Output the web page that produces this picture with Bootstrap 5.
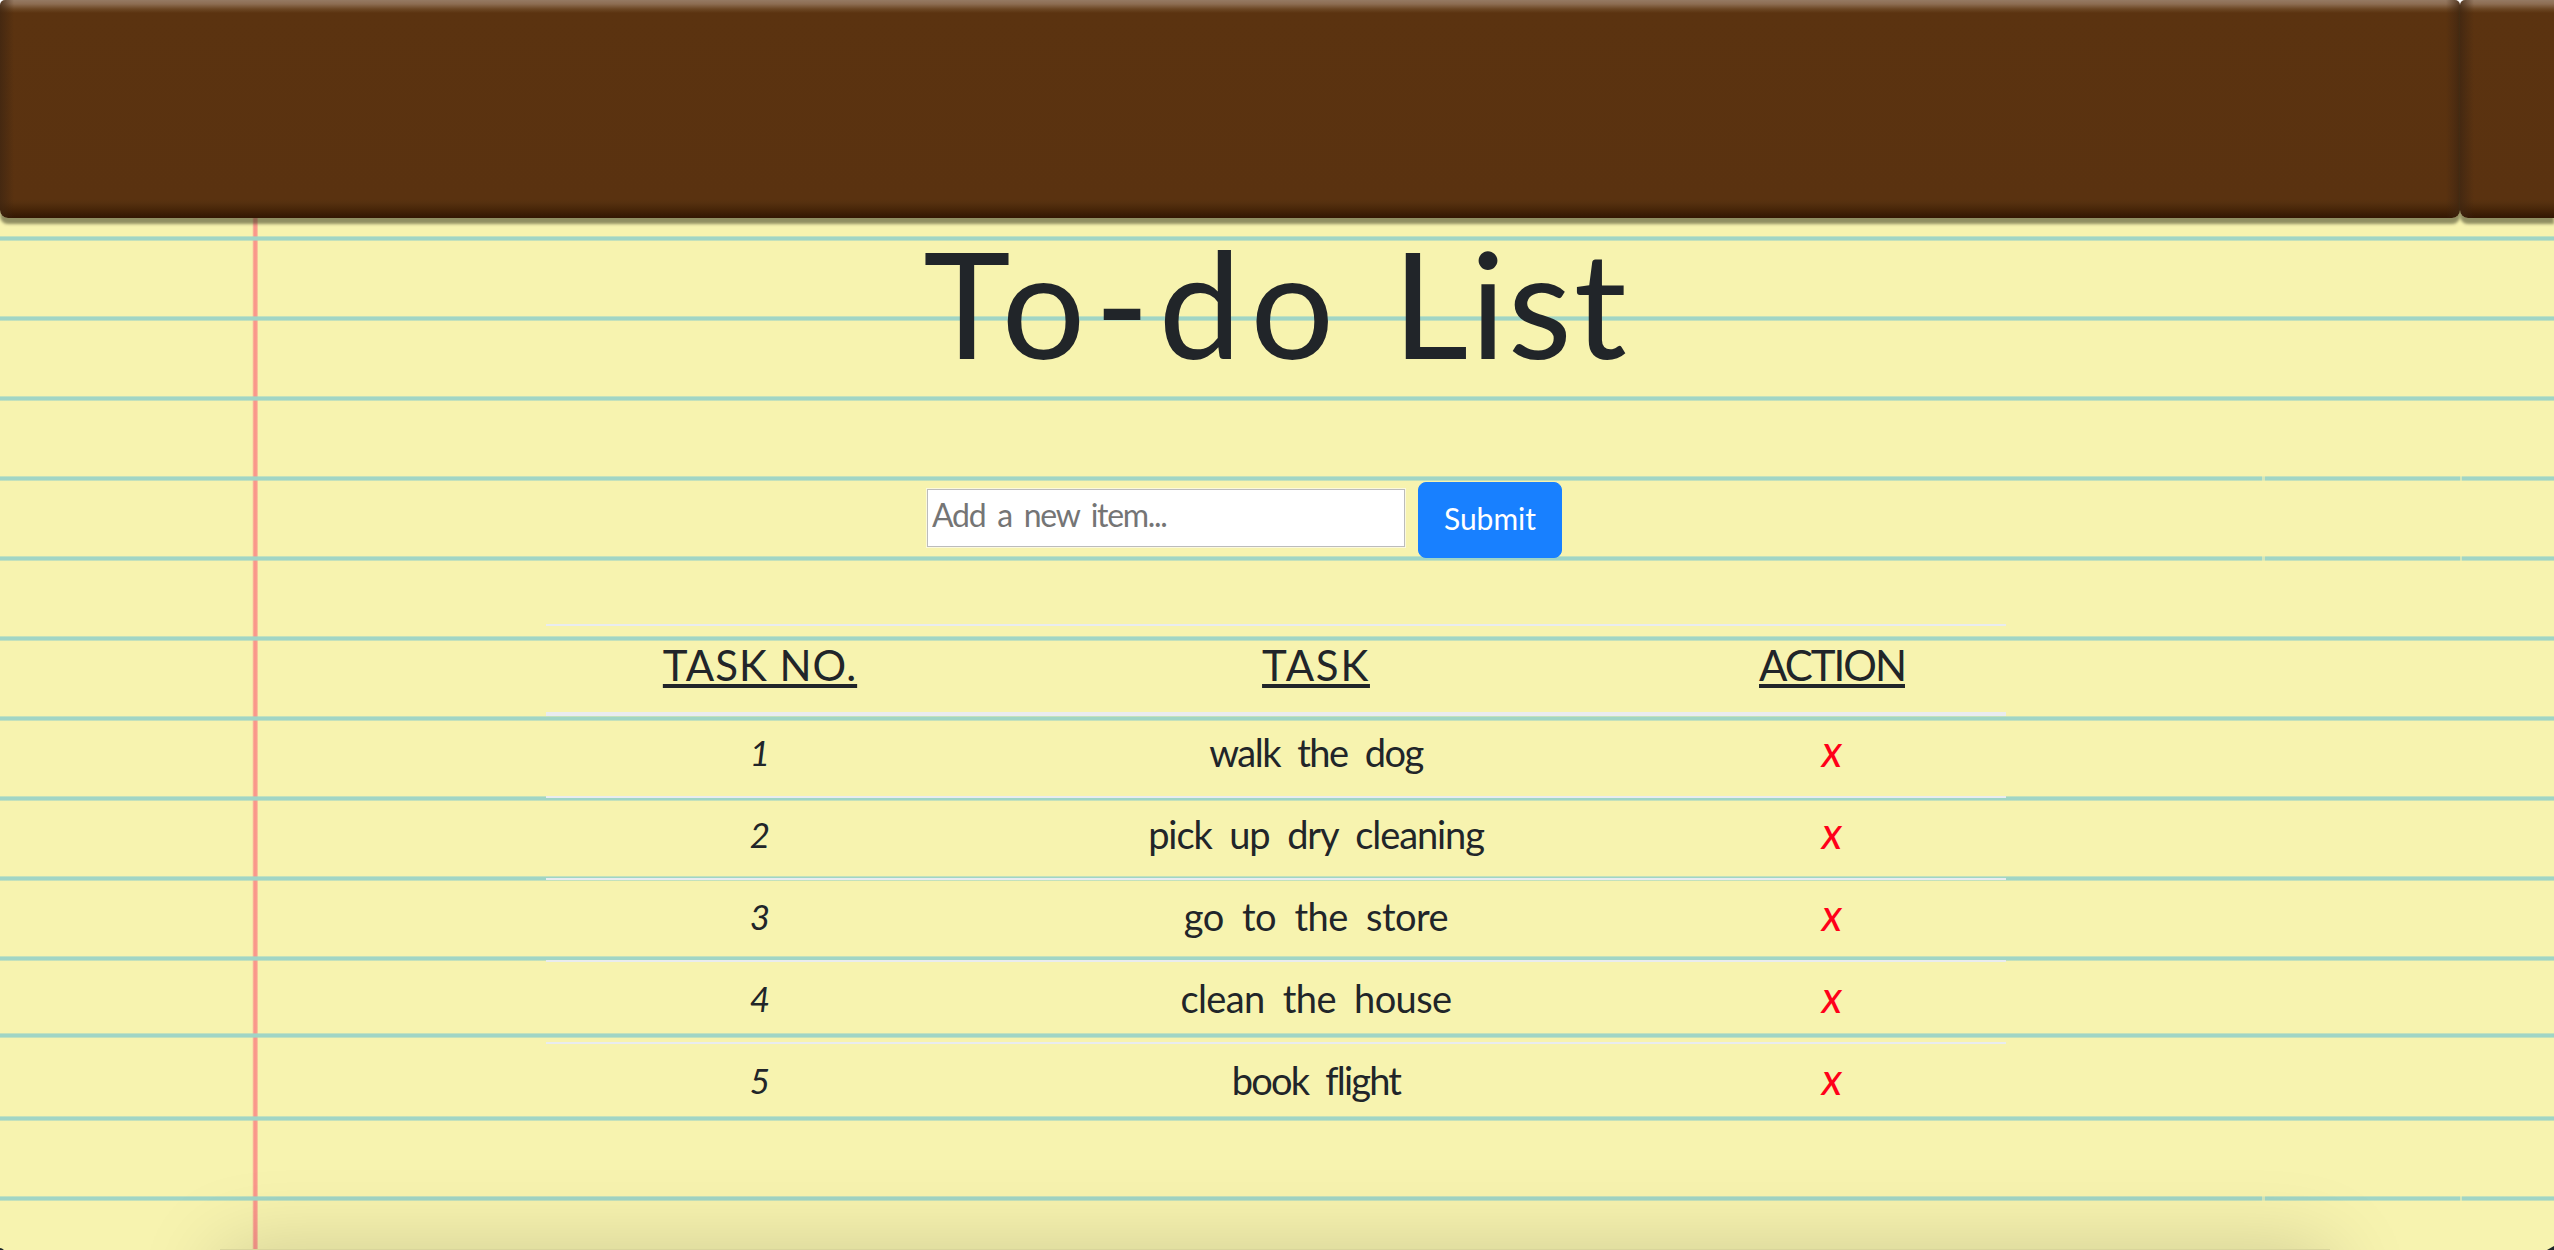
<!DOCTYPE html>
<html lang="en">
<head>
<meta charset="utf-8">
<title>To-do List</title>
<link href="https://cdn.jsdelivr.net/npm/bootstrap@5.3.0/dist/css/bootstrap.min.css" rel="stylesheet">
<style>
  body { background: #f7f3af; color: #212529; font-family: Lato, "Open Sans", sans-serif; height: 1250px; }
  .pad { height: 1250px; }
  .ruling { left: 0; top: 0; z-index: 0; }
  .layer { z-index: 1; }
  .binding { height: 218px; background: linear-gradient(#fff 60%, transparent 60%); }
  .strip {
    position: relative; height: 218px; border-radius: 5px 5px 8px 8px;
    background: linear-gradient(90deg, rgba(62,37,17,.75), rgba(62,37,17,0) 14px) left / 50% 100% no-repeat,
      linear-gradient(270deg, rgba(62,37,17,.75), rgba(62,37,17,0) 14px) right / 50% 100% no-repeat,
      linear-gradient(#957a63 0, #8d6d52 4px, #6c4724 9px, #5b3310 13px, #5a3210 199px, #55300f 203px, #442307 211px, #341803 217px);
    box-shadow: 0 6px 3px rgba(60,60,35,.55);
  }
  .strip-main { width: 2460px; }
  .strip-next { border-top-right-radius: 0; border-bottom-right-radius: 0; background-size: 50% 100%, 0 0, 100% 100%; }
  .title { font-size: 148px; line-height: 168px; font-weight: 400; height: 172px; }
  .t-one { letter-spacing: 9px; margin-right: 49px; margin-left: -4px; }
  .t-two { letter-spacing: 2px; margin-right: -2px; }
  .add-form { margin-top: 92px; height: 76px; gap: 12px; padding-right: 66px; }
  .add-input {
    width: 480px; height: 60px; margin-top: -4px; padding: 0 4px 7px 5px; font-size: 32px; letter-spacing: -1.3px; word-spacing: 5px;
    background: #fff; border: 1px solid #fbf9dd; border-radius: 0; box-shadow: inset 0 0 0 1px #bcbcbc; outline: 0;
  }
  .add-input::placeholder { color: #757575; opacity: 1; }
  .add-btn {
    --bs-btn-bg: #1880ff; --bs-btn-border-color: #1880ff;
    width: 144px; height: 76px; padding: 0 0 4px; font-size: 30px; letter-spacing: 0; border-radius: 8px;
  }
  .tasks { width: 1460px; margin: 66px 0 0 546px; border-collapse: separate; border-spacing: 0; table-layout: fixed; }
  .tasks > :not(caption) > * > * { background: transparent; border: 0; padding: 0; color: #212529; text-align: center; }
  .tasks > thead > tr > th {
    height: 92px; padding-bottom: 8px; border-top: 2px solid #e9ecef; border-bottom: 4px solid #e9ecef;
    font-size: 42px; line-height: 78px; font-weight: 400;
    text-decoration: underline; text-decoration-thickness: 4px; text-underline-offset: 3px; text-decoration-skip-ink: none;
  }
  .tasks > tbody > tr > td { height: 80px; padding-bottom: 8px; font-size: 38px; line-height: 72px; word-spacing: 9px; }
  .tasks > tbody > tr + tr > td { height: 82px; border-top: 2px solid #e9ecef; }
  .tasks > tbody > tr > td:first-child { font-size: 35px; font-style: italic; }
  .tasks > tbody > tr > td:last-child { padding-bottom: 12px; font-size: 44px; line-height: 68px; }
  .del { color: #ff0019; text-decoration: none; font-style: italic; }
  .dock { position: absolute; left: 220px; top: 1249px; width: 2110px; height: 100px; background: #d9d59b; box-shadow: 0 0 82px rgba(0,0,0,.17); }
</style>
</head>
<body class="m-0 overflow-hidden">
<div class="pad position-relative overflow-hidden">
  <svg class="ruling position-absolute" width="2554" height="1250" aria-hidden="true">
    <defs>
      <linearGradient id="blue" x1="0" y1="0" x2="0" y2="1">
        <stop offset="0" stop-color="#a0d5c5" stop-opacity=".4"/><stop offset=".3" stop-color="#a0d5c5"/>
        <stop offset=".7" stop-color="#a0d5c5"/><stop offset="1" stop-color="#a0d5c5" stop-opacity=".4"/>
      </linearGradient>
      <linearGradient id="red">
        <stop offset="0" stop-color="#fa978b" stop-opacity=".35"/><stop offset=".3" stop-color="#fa978b"/>
        <stop offset=".7" stop-color="#fa978b"/><stop offset="1" stop-color="#fa978b" stop-opacity=".35"/>
      </linearGradient>
      <g id="rule"><rect width="2554" height="5" fill="url(#blue)"/></g>
      <g id="gaps" fill="#f7f3af" fill-opacity=".6"><rect x="2262" width="3" height="5"/><rect x="2460" width="2" height="5"/></g>
    </defs>
    <rect x="252.5" y="218" width="5.5" height="1032" fill="url(#red)"/>
    <use href="#rule" y="236"/><use href="#rule" y="316"/><use href="#rule" y="396"/><use href="#rule" y="476"/>
    <use href="#rule" y="556"/><use href="#rule" y="636"/><use href="#rule" y="716"/><use href="#rule" y="796"/>
    <use href="#rule" y="876"/><use href="#rule" y="956"/><use href="#rule" y="1033"/><use href="#rule" y="1116"/><use href="#rule" y="1196"/>
    <use href="#gaps" y="476"/><use href="#gaps" y="556"/><use href="#gaps" y="1196"/>
    <path d="M0 1248Q2 1248 4 1250H0zM2547 1250L2554 1246V1250z" fill="#1b2529"/>
  </svg>

  <div class="layer position-relative">
    <header class="binding d-flex">
      <div class="strip strip-main flex-shrink-0"></div>
      <div class="strip strip-next flex-grow-1"></div>
    </header>

    <main>
      <h1 class="title d-flex justify-content-center m-0"><span class="t-one">To-do</span> <span class="t-two">List</span></h1>

      <form class="add-form d-flex justify-content-center align-items-center">
        <input class="add-input" type="text" placeholder="Add a new item...">
        <button class="add-btn btn btn-primary" type="button">Submit</button>
      </form>

      <table class="tasks table">
        <colgroup><col style="width:428px"><col style="width:684px"><col style="width:348px"></colgroup>
        <thead>
          <tr><th style="letter-spacing:1px">TASK NO.</th><th style="letter-spacing:1.75px">TASK</th><th style="letter-spacing:-2px">ACTION</th></tr>
        </thead>
        <tbody>
          <tr><td>1</td><td style="letter-spacing:-1.5px">walk the dog</td><td><a class="del">x</a></td></tr>
          <tr><td>2</td><td style="letter-spacing:-1.1px">pick up dry cleaning</td><td><a class="del">x</a></td></tr>
          <tr><td>3</td><td style="letter-spacing:-.5px">go to the store</td><td><a class="del">x</a></td></tr>
          <tr><td>4</td><td style="letter-spacing:-.6px">clean the house</td><td><a class="del">x</a></td></tr>
          <tr><td>5</td><td style="letter-spacing:-1.8px">book flight</td><td><a class="del">x</a></td></tr>
        </tbody>
      </table>
    </main>
  </div>
  <div class="dock"></div>
</div>
<script src="https://cdn.jsdelivr.net/npm/bootstrap@5.3.0/dist/js/bootstrap.bundle.min.js"></script>
</body>
</html>
